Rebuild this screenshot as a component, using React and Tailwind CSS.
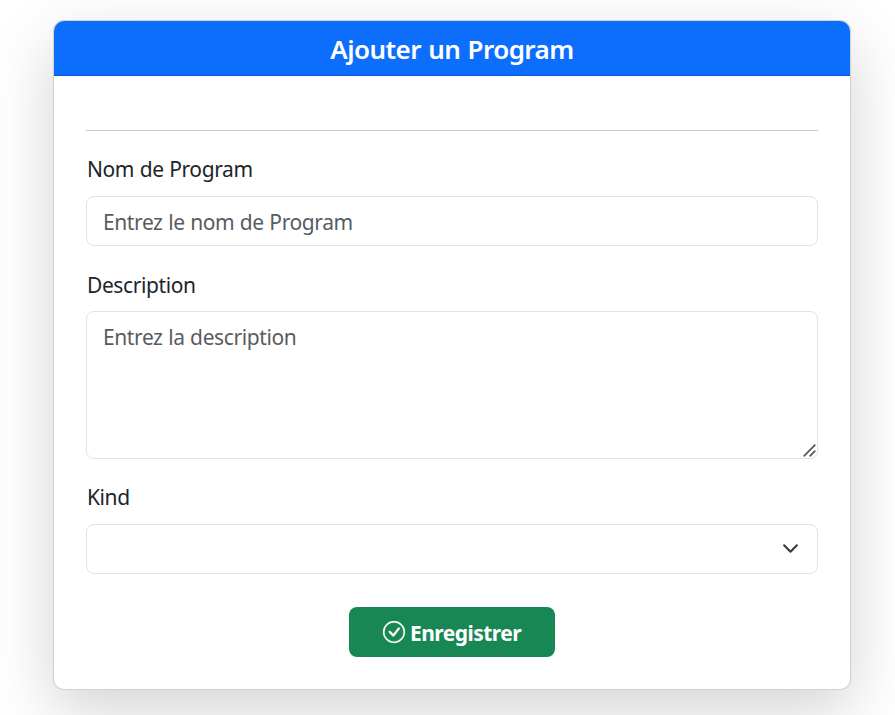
import React from 'react';

const control =
  'block w-full rounded-lg border border-[#dee2e6] bg-white px-4 text-[21px] leading-8 tracking-[-0.4px] [word-spacing:0.5px] text-[#212529] placeholder:text-[#595c5f] placeholder:opacity-100 outline-none';

function Label({ htmlFor, children }) {
  return (
    <label htmlFor={htmlFor} className="ml-px block h-8 w-fit text-[21px] leading-8 tracking-[-0.4px] [word-spacing:0.5px] whitespace-nowrap text-[#212529]">
      {children}
    </label>
  );
}

export default function App() {
  return (
    <div className="h-[715px] overflow-hidden bg-white px-[53px] pt-5 font-['Noto_Sans',sans-serif]">
      <div className="flex h-[670px] w-[798px] flex-col overflow-hidden rounded-[11px] border border-black/[0.175] bg-white shadow-[0_21px_64px_rgba(0,0,0,0.175)]">
        <header className="flex h-[55px] shrink-0 items-center justify-center border-b border-black/[0.175] bg-[#0d6efd] pt-0.5">
          <h1 className="text-[26px] leading-8 font-semibold tracking-[-0.55px] [word-spacing:1px] whitespace-nowrap text-white">Ajouter un Program</h1>
        </header>
        <form className="flex flex-col px-8 pt-[54px]" onSubmit={(e) => e.preventDefault()}>
          <hr className="mb-[22px] border-t border-[#c8c9ca]" />
          <Label htmlFor="name">Nom de Program</Label>
          <input id="name" placeholder="Entrez le nom de Program" className={`${control} mt-[11px] h-[50px] pt-0.5`} />
          <div className="mt-[23px]">
            <Label htmlFor="description">Description</Label>
          </div>
          <div className="relative mt-[10px] h-[148px]">
            <textarea id="description" placeholder="Entrez la description" className={`${control} h-full resize-none pt-[9px]`} />
            <svg className="absolute right-[2px] bottom-[2px]" width="13" height="13" viewBox="0 0 13 13" fill="none" stroke="#555" strokeWidth="1.7">
              <path d="M.7 12.3 12.3.7M6.7 12.3l5.6-5.6" />
            </svg>
          </div>
          <div className="mt-[22px]">
            <Label htmlFor="kind">Kind</Label>
          </div>
          <div className="relative mt-[11px] h-[50px]">
            <select id="kind" className={`${control} h-full appearance-none`} />
            <svg className="pointer-events-none absolute top-4 right-[19px]" width="17" height="17" viewBox="0 0 16 16" fill="none" stroke="#343a40" strokeLinecap="round" strokeLinejoin="round" strokeWidth="2">
              <path d="m2 5 6 6 6-6" />
            </svg>
          </div>
          <button className="mt-[33px] flex h-[50px] w-[206px] items-center justify-center gap-[5px] self-center rounded-lg bg-[#198754] text-white">
            <svg width="22" height="22" viewBox="0 0 16 16" fill="currentColor" stroke="currentColor" strokeWidth="0.2" overflow="visible">
              <path d="M8 15A7 7 0 1 1 8 1a7 7 0 0 1 0 14m0 1A8 8 0 1 0 8 0a8 8 0 0 0 0 16" />
              <path d="m10.97 4.97-.02.022-3.473 4.425-2.093-2.094a.75.75 0 0 0-1.06 1.06L6.97 11.03a.75.75 0 0 0 1.079-.02l3.992-4.99a.75.75 0 0 0-1.071-1.05" />
            </svg>
            <span className="pt-0.5 text-[21px] leading-8 font-bold tracking-[-0.55px] whitespace-nowrap">Enregistrer</span>
          </button>
        </form>
      </div>
    </div>
  );
}
